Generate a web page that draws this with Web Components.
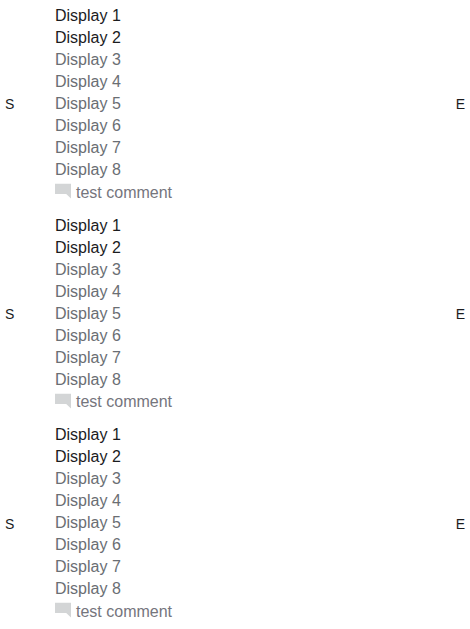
<!DOCTYPE html>
<html lang="en"><head><meta charset="utf-8"><title>Displays</title>
<style>body{margin:0;background:#fff;font-family:"Liberation Sans",Arial,sans-serif;overflow:hidden}</style></head>
<body><display-list></display-list>
<script>
class CommentLine extends HTMLElement{
 constructor(){super();this.attachShadow({mode:'open'}).innerHTML=`<style>
 :host{display:flex;align-items:flex-start;gap:5px;height:23.9px;margin-top:-.3px;line-height:24px;color:#75757d}
 svg{display:block;width:16px;height:16px;margin-top:2.3px;fill:#d3d5d6}</style>
 <svg viewBox="0 0 16 16"><path d="M0 .7h16v14.8L11.2 11H0z"/></svg><span><slot></slot></span>`}
}
customElements.define('comment-line',CommentLine);
class DisplayItem extends HTMLElement{
 constructor(){super();this.attachShadow({mode:'open'}).innerHTML=`<style>
 :host{display:grid;grid-template-columns:50px 1fr 50px;align-items:center;height:209.6px;box-sizing:border-box;padding:5px;font-size:16px;line-height:22px;color:#6a6e73}
 .side{font-size:14px;color:#1b1c1e;padding-bottom:.8px}.end{text-align:right}.strong{color:#1b1c1e}</style>
 <div class="side">S</div><div>${[1,2,3,4,5,6,7,8].map(n=>`<div class="${n<3?'strong':''}">Display ${n}</div>`).join('')}<comment-line>test comment</comment-line></div><div class="side end">E</div>`}
}
customElements.define('display-item',DisplayItem);
class DisplayList extends HTMLElement{
 constructor(){super();this.attachShadow({mode:'open'}).innerHTML=`<style>:host{display:block}</style>${'<display-item></display-item>'.repeat(3)}`}
}
customElements.define('display-list',DisplayList);
</script></body></html>
